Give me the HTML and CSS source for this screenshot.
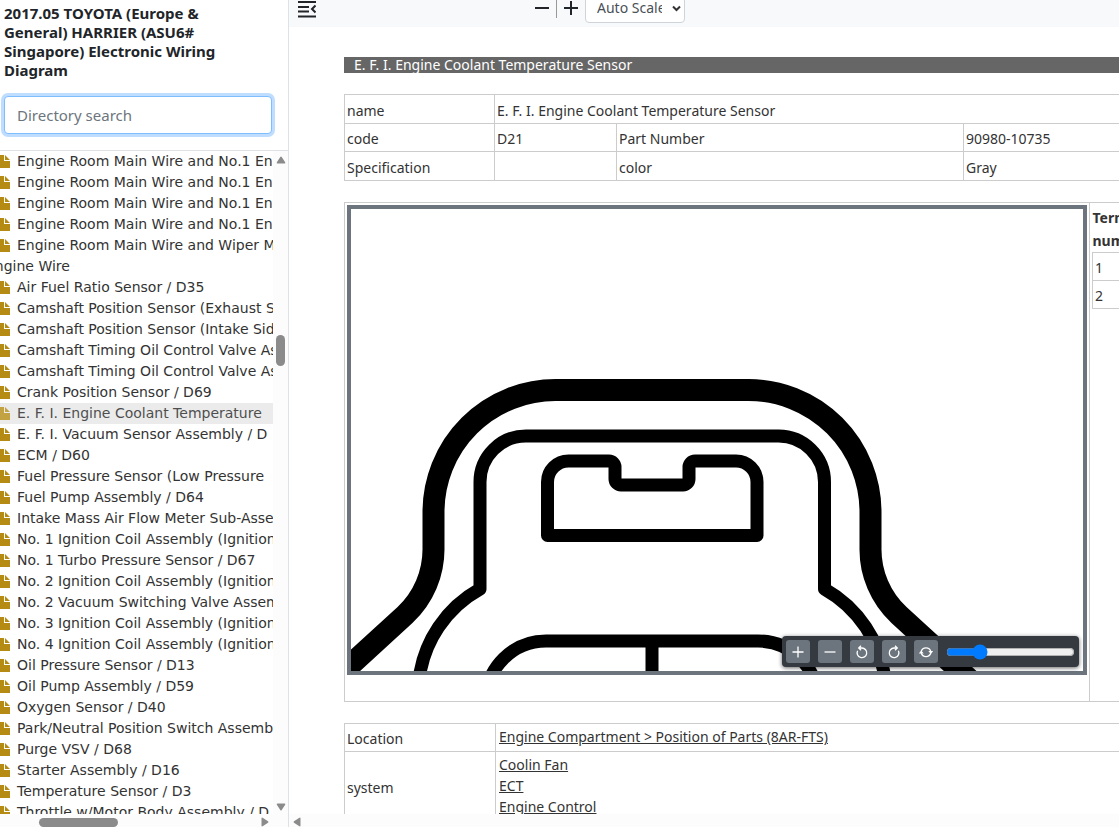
FILE: index.html
```html
<!DOCTYPE html>
<html lang="en">
<head>
<meta charset="utf-8">
<meta name="viewport" content="width=device-width, initial-scale=1">
<title>Electronic Wiring Diagram</title>
<link rel="stylesheet" href="styles.css">
</head>
<body>
<svg class="defs" aria-hidden="true">
  <symbol id="file" viewBox="0 0 10 13"><path d="M0 0h4v6h6v7H0z M5 0l5 5H5z"/></symbol>
</svg>
<div class="app">
  <aside class="sidebar">
    <h1 class="title">2017.05 TOYOTA (Europe &amp; General) HARRIER (ASU6# Singapore) Electronic Wiring Diagram</h1>
    <div class="search">
      <input class="search-input" type="text" placeholder="Directory search" aria-label="Directory search" autofocus>
    </div>
    <div class="tree-area">
      <ul class="tree">
        <li class="node"><svg class="file"><use href="#file"/></svg>Engine Room Main Wire and No.1 Engine Room</li>
        <li class="node"><svg class="file"><use href="#file"/></svg>Engine Room Main Wire and No.1 Engine Room</li>
        <li class="node"><svg class="file"><use href="#file"/></svg>Engine Room Main Wire and No.1 Engine Room</li>
        <li class="node"><svg class="file"><use href="#file"/></svg>Engine Room Main Wire and No.1 Engine Room</li>
        <li class="node"><svg class="file"><use href="#file"/></svg>Engine Room Main Wire and Wiper Motor</li>
        <li class="node node-parent">Engine Wire</li>
        <li class="node"><svg class="file"><use href="#file"/></svg>Air Fuel Ratio Sensor / D35</li>
        <li class="node"><svg class="file"><use href="#file"/></svg>Camshaft Position Sensor (Exhaust Side)</li>
        <li class="node"><svg class="file"><use href="#file"/></svg>Camshaft Position Sensor (Intake Side)</li>
        <li class="node"><svg class="file"><use href="#file"/></svg>Camshaft Timing Oil Control Valve Assembly</li>
        <li class="node"><svg class="file"><use href="#file"/></svg>Camshaft Timing Oil Control Valve Assembly</li>
        <li class="node"><svg class="file"><use href="#file"/></svg>Crank Position Sensor / D69</li>
        <li class="node node-current"><svg class="file"><use href="#file"/></svg>E. F. I. Engine Coolant Temperature</li>
        <li class="node"><svg class="file"><use href="#file"/></svg>E. F. I. Vacuum Sensor Assembly / D</li>
        <li class="node"><svg class="file"><use href="#file"/></svg>ECM / D60</li>
        <li class="node"><svg class="file"><use href="#file"/></svg>Fuel Pressure Sensor (Low Pressure</li>
        <li class="node"><svg class="file"><use href="#file"/></svg>Fuel Pump Assembly / D64</li>
        <li class="node"><svg class="file"><use href="#file"/></svg>Intake Mass Air Flow Meter Sub-Assembly</li>
        <li class="node"><svg class="file"><use href="#file"/></svg>No. 1 Ignition Coil Assembly (Ignition</li>
        <li class="node"><svg class="file"><use href="#file"/></svg>No. 1 Turbo Pressure Sensor / D67</li>
        <li class="node"><svg class="file"><use href="#file"/></svg>No. 2 Ignition Coil Assembly (Ignition</li>
        <li class="node"><svg class="file"><use href="#file"/></svg>No. 2 Vacuum Switching Valve Assembly</li>
        <li class="node"><svg class="file"><use href="#file"/></svg>No. 3 Ignition Coil Assembly (Ignition</li>
        <li class="node"><svg class="file"><use href="#file"/></svg>No. 4 Ignition Coil Assembly (Ignition</li>
        <li class="node"><svg class="file"><use href="#file"/></svg>Oil Pressure Sensor / D13</li>
        <li class="node"><svg class="file"><use href="#file"/></svg>Oil Pump Assembly / D59</li>
        <li class="node"><svg class="file"><use href="#file"/></svg>Oxygen Sensor / D40</li>
        <li class="node"><svg class="file"><use href="#file"/></svg>Park/Neutral Position Switch Assembly</li>
        <li class="node"><svg class="file"><use href="#file"/></svg>Purge VSV / D68</li>
        <li class="node"><svg class="file"><use href="#file"/></svg>Starter Assembly / D16</li>
        <li class="node"><svg class="file"><use href="#file"/></svg>Temperature Sensor / D3</li>
        <li class="node"><svg class="file"><use href="#file"/></svg>Throttle w/Motor Body Assembly / D</li>
      </ul>
      <div class="vbar" aria-hidden="true">
        <svg class="arrow" viewBox="0 0 10 8"><path d="M1.500 7.500Q0 7.500 1 6L4.300 1Q5 0 5.700 1L9 6Q10 7.500 8.500 7.500z"/></svg>
        <div class="vthumb"></div>
        <svg class="arrow" viewBox="0 0 10 8"><path d="M1.500.5Q0 .5 1 2L4.300 7Q5 8 5.700 7L9 2Q10 .5 8.500.5z"/></svg>
      </div>
    </div>
    <div class="hbar" aria-hidden="true">
      <div class="hthumb"></div>
      <svg class="arrow-side" viewBox="0 0 8 10"><path d="M.5 1.500Q.5 0 2 1L7 4.300Q8 5 7 5.700L2 9Q.5 10 .5 8.500z"/></svg>
    </div>
  </aside>

  <main class="main">
    <header class="toolbar">
      <button class="tool menu" type="button" aria-label="Toggle sidebar">
        <svg width="18" height="18" viewBox="0 0 18 18"><path class="line" d="M0 2h18M0 7h11M0 11.500h11M0 16.500h18M17.500 5.500L14 9l3.500 3.500"/></svg>
      </button>
      <div class="zoom">
        <button class="tool" type="button" aria-label="Zoom out">
          <svg width="16" height="16" viewBox="0 0 16 16"><path class="line" d="M1 8h14"/></svg>
        </button>
        <span class="split"></span>
        <button class="tool" type="button" aria-label="Zoom in">
          <svg width="16" height="16" viewBox="0 0 16 16"><path class="line" d="M1 8h14M8 1v14"/></svg>
        </button>
        <div class="scale">
          <select class="scale-select" aria-label="Scale"><option>Auto Scale</option></select>
          <svg class="chevron" width="9" height="7" viewBox="0 0 9 7"><path d="M1 1.500L4.500 5L8 1.500"/></svg>
        </div>
      </div>
    </header>

    <div class="viewport">
      <div class="page">
        <h2 class="heading">E. F. I. Engine Coolant Temperature Sensor</h2>

        <table class="grid info">
          <colgroup><col class="c-label"><col class="c-code"><col class="c-part"><col></colgroup>
          <tr><th scope="row">name</th><td colspan="3">E. F. I. Engine Coolant Temperature Sensor</td></tr>
          <tr><th scope="row">code</th><td>D21</td><th scope="row">Part Number</th><td>90980-10735</td></tr>
          <tr><th scope="row">Specification</th><td></td><th scope="row">color</th><td>Gray</td></tr>
        </table>

        <div class="connector">
          <div class="figure-cell">
            <div class="figure">
              <svg class="drawing" viewBox="351 209 732 462" role="img" aria-label="Connector outline">
                <g class="thick">
                  <path d="M334 680L405 615A90 90 0 0 0 433.500 548V512A122 122 0 0 1 556 390H748A122 122 0 0 1 870.500 512V548A90 90 0 0 0 899 615L970 680"/>
                </g>
                <g class="thin">
                  <path d="M419 680A120 120 0 0 1 480 589V482A46 46 0 0 1 526 436H778A46 46 0 0 1 824.500 482V589A120 120 0 0 1 885 680"/>
                  <path d="M547.500 535.500V482a21 21 0 0 1 21-21H609a6 6 0 0 1 6 6V479a6 6 0 0 0 6 6H683a6 6 0 0 0 6-6V467a6 6 0 0 1 6-6H736a21 21 0 0 1 21 21V535.500Z"/>
                  <path d="M486 701A60 60 0 0 1 546 641H758A60 60 0 0 1 818 701M652 641V680"/>
                </g>
              </svg>
              <div class="controls">
                <button class="ctl" type="button" aria-label="Zoom in"><svg width="14" height="14" viewBox="0 0 14 14"><path d="M1.500 7h11M7 1.500v11"/></svg></button>
                <button class="ctl" type="button" aria-label="Zoom out"><svg width="14" height="14" viewBox="0 0 14 14"><path d="M1.500 7h11"/></svg></button>
                <button class="ctl" type="button" aria-label="Rotate left"><svg width="14" height="14" viewBox="0 0 14 14"><path d="M4.500 3H7A4.800 4.800 0 1 1 2.600 5.700M6 .7L3.700 3L6 5.300"/></svg></button>
                <button class="ctl" type="button" aria-label="Rotate right"><svg width="14" height="14" viewBox="0 0 14 14"><path d="M9.500 3H7A4.800 4.800 0 1 0 11.400 5.700M8 .7L10.300 3L8 5.300"/></svg></button>
                <button class="ctl" type="button" aria-label="Reset"><svg width="14" height="14" viewBox="0 0 14 14"><path d="M2.200 6.500A5 5 0 0 1 11.800 6.500M11.800 8A5 5 0 0 1 2.200 8"/><path class="solid" d="M9.300 6H14.200L11.800 9zM-.2 8.400H4.700L2.200 5.400z"/></svg></button>
                <input class="zoom-range" type="range" min="0" max="200" value="46" aria-label="Zoom level">
              </div>
            </div>
          </div>
          <div class="terminal-cell">
            <table class="terminals">
              <thead><tr><th scope="col">Terminal number</th></tr></thead>
              <tbody><tr><td>1</td></tr><tr><td>2</td></tr></tbody>
            </table>
          </div>
        </div>

        <table class="grid refs">
          <colgroup><col class="c-ref"><col></colgroup>
          <tr><th scope="row">Location</th><td><a href="#location">Engine Compartment &gt; Position of Parts (8AR-FTS)</a></td></tr>
          <tr><th scope="row">system</th><td><a href="#fan">Coolin Fan</a><a href="#ect">ECT</a><a href="#engine">Engine Control</a></td></tr>
        </table>
      </div>
    </div>
    <div class="hbar main-hbar" aria-hidden="true">
      <svg class="arrow-side" viewBox="0 0 8 10"><path d="M7.500 1.500Q7.500 0 6 1L1 4.300Q0 5 1 5.700L6 9Q7.500 10 7.500 8.500z"/></svg>
    </div>
  </main>
</div>
</body>
</html>
```

FILE: styles.css
```css
* { box-sizing: border-box; }

body {
  margin: 0;
  font-family: "Noto Sans", "Open Sans", sans-serif;
  font-size: 14px;
  color: #333;
  background: #fff;
}

.defs { display: none; }

.app {
  display: flex;
  height: 100vh;
  overflow: hidden;
}

/* Sidebar */
.sidebar {
  flex: none;
  width: 289px;
  display: flex;
  flex-direction: column;
  border-right: 1px solid #dee2e6;
}

.title {
  margin: 0;
  padding: 4px 48px 0 4px;
  font-size: 15px;
  line-height: 19px;
  font-weight: 700;
  color: #212529;
}

.search {
  padding: 16px 16px 16px 4px;
  border-bottom: 1px solid #dee2e6;
}

.search-input {
  display: block;
  width: 100%;
  height: 38px;
  padding: 6px 12px;
  font: inherit;
  font-size: 15px;
  color: #495057;
  border: 1px solid #80bdff;
  border-radius: 4px;
  outline: 0;
  box-shadow: 0 0 0 3px rgba(0, 123, 255, .25);
}

.search-input::placeholder { color: #6c757d; }

.tree-area {
  flex: 1;
  min-height: 0;
  display: flex;
}

.tree {
  flex: 1;
  min-width: 0;
  margin: 0;
  padding: 0;
  list-style: none;
  overflow: hidden;
  font-family: "DejaVu Sans", sans-serif;
  font-size: 14px;
  line-height: 21px;
}

.node {
  display: flex;
  align-items: center;
  gap: 7px;
  height: 21px;
  white-space: nowrap;
}

.node-parent { margin-left: -14px; }

.node-current {
  background: #e7e7e7;
  color: #222;
  opacity: .8;
}

.file {
  flex: none;
  width: 10px;
  height: 13px;
  fill: #b58b14;
}

.vbar {
  flex: none;
  width: 15px;
  padding: 5px 0 3px;
  display: flex;
  flex-direction: column;
  align-items: center;
  background: #fcfcfc;
}

.arrow {
  width: 10px;
  height: 8px;
  fill: #8b8b8b;
}

.vthumb {
  width: 9px;
  height: 31px;
  margin: 171px 0 auto;
  border-radius: 5px;
  background: #8b8b8b;
}

.hbar {
  flex: none;
  height: 13px;
  display: flex;
  align-items: center;
  background: #fcfcfc;
}

.main-hbar { padding-left: 4px; }

.hthumb {
  width: 79px;
  height: 9px;
  margin: 4px auto 0 39px;
  border-radius: 5px;
  background: #8b8b8b;
}

.arrow-side {
  width: 8px;
  height: 10px;
  margin: 2px 19px 0 0;
  fill: #8b8b8b;
}

/* Main area */
.main {
  flex: 1;
  min-width: 0;
  display: flex;
  flex-direction: column;
}

.toolbar {
  flex: none;
  height: 27px;
  display: flex;
  align-items: flex-end;
  padding: 0 9px 4px;
  background: #f8f9fa;
  overflow: hidden;
}

.tool {
  display: flex;
  padding: 0;
  border: 0;
  background: none;
}

.menu { padding-bottom: 5px; }

.line {
  fill: none;
  stroke: #212529;
  stroke-width: 2;
}

.zoom {
  display: flex;
  align-items: center;
  gap: 6px;
  margin-left: 218px;
}

.split {
  width: 1px;
  height: 20px;
  background: #999;
}

.scale {
  display: flex;
  position: relative;
}

.scale-select {
  width: 100px;
  height: 30px;
  padding: 0 22px 2px 11px;
  appearance: none;
  font: inherit;
  color: #495057;
  background: #fff;
  border: 1px solid #ced4da;
  border-radius: 4px;
}

.chevron {
  position: absolute;
  right: 4px;
  top: 12px;
  fill: none;
  stroke: #333;
  stroke-width: 2;
  pointer-events: none;
}

.viewport {
  flex: 1;
  min-height: 0;
  overflow: hidden;
}

.page {
  display: flex;
  flex-direction: column;
  gap: 21px;
  margin-right: -120px;
  padding: 30px 0 0 55px;
}

.heading {
  margin: 0;
  padding-left: 10px;
  font-size: 14px;
  font-weight: 400;
  line-height: 16px;
  color: #fff;
  background: #666;
}

.grid {
  width: 100%;
  border-collapse: collapse;
  table-layout: fixed;
}

.grid th,
.grid td {
  height: 28px;
  padding: 3px 2px 0;
  line-height: 24px;
  font-weight: 400;
  text-align: left;
  border: 1px solid #ccc;
}

.info tr:nth-child(odd) > * {
  height: 29px;
  padding-top: 4px;
}

.c-label { width: 150px; }
.c-ref { width: 151px; }
.c-code { width: 122px; }
.c-part { width: 347px; }

.connector {
  display: flex;
  border: 1px solid #ccc;
}

.figure-cell {
  flex: none;
  width: calc(100% - 148px);
  padding: 2px 2px 26px;
  border-right: 1px solid #ccc;
}

.figure {
  position: relative;
  border: 4px solid #6c757d;
}

.drawing {
  display: block;
  width: 100%;
}

.thick,
.thin {
  fill: none;
  stroke: #000;
  stroke-linejoin: round;
}

.thick { stroke-width: 22px; }
.thin { stroke-width: 13px; }

.controls {
  position: absolute;
  right: 4px;
  bottom: 4px;
  display: flex;
  align-items: center;
  gap: 8px;
  padding: 4px;
  border-radius: 4px;
  background: #343a40;
  box-shadow: 0 1px 4px rgba(0, 0, 0, .6);
}

.ctl {
  width: 24px;
  height: 23px;
  padding: 0;
  display: flex;
  align-items: center;
  justify-content: center;
  border: 0;
  border-radius: 3px;
  background: #6c757d;
}

.ctl path {
  fill: none;
  stroke: #fff;
  stroke-width: 1.3;
}

.ctl .solid {
  fill: #fff;
  stroke: none;
}

.zoom-range {
  width: 129px;
  height: 16px;
  margin: 0;
  accent-color: #007bff;
}

.terminal-cell { padding: 3px 2px; }

.terminals { border-collapse: collapse; }

.terminals th {
  width: 100px;
  height: 46px;
  padding: 0 20px 0 0;
  line-height: 23px;
  text-align: left;
  vertical-align: bottom;
}

.terminals td {
  height: 28px;
  padding: 3px 2px 0;
  line-height: 24px;
  border: 1px solid #ccc;
}

.refs a {
  display: block;
  width: fit-content;
  line-height: 21px;
  color: #333;
  text-underline-offset: 1px;
}

.grid.refs td { padding: 2px 3px 4px; }
```
